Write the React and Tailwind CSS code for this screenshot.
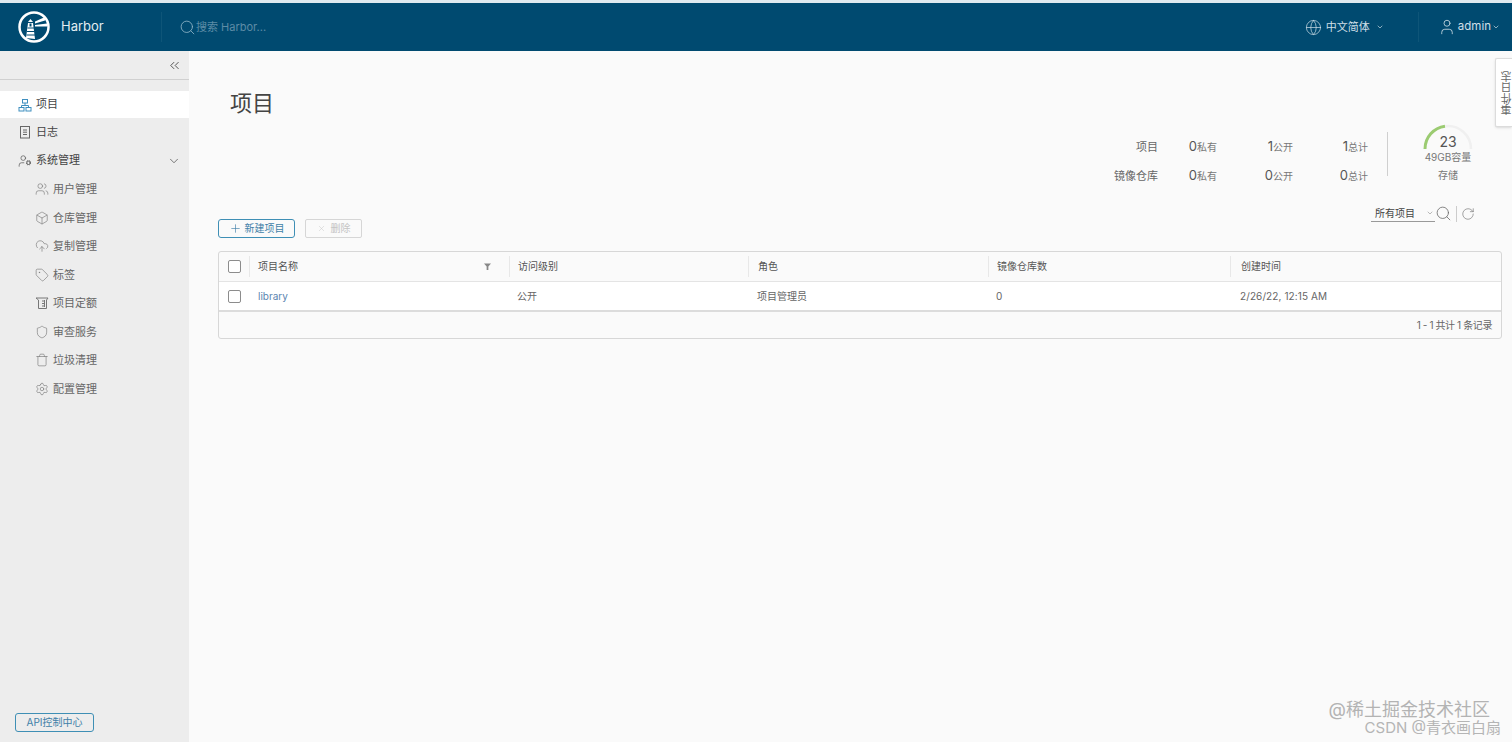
import React from 'react';
import {
  Box,
  ChevronDown,
  ChevronsLeft,
  CloudUpload,
  Globe,
  Plus,
  RotateCw,
  Search,
  Settings,
  Shield,
  Tag,
  Trash,
  User,
  UserCog,
  Users,
  X,
} from 'lucide-react';

const subNav = [
  { label: '用户管理', icon: Users },
  { label: '仓库管理', icon: Box },
  { label: '复制管理', icon: CloudUpload },
  { label: '标签', icon: Tag },
  { label: '项目定额', icon: QuotaIcon },
  { label: '审查服务', icon: Shield },
  { label: '垃圾清理', icon: Trash },
  { label: '配置管理', icon: Settings },
];

const stats = [
  { label: '项目', values: ['0', '1', '1'] },
  { label: '镜像仓库', values: ['0', '0', '0'] },
];
const statUnits = ['私有', '公开', '总计'];

const columns = [
  { label: '访问级别', width: 'w-[239px]', pad: 'pl-2' },
  { label: '角色', width: 'w-[240px]', pad: 'pl-[9px]' },
  { label: '镜像仓库数', width: 'w-[242px]', pad: 'pl-2' },
  { label: '创建时间', width: 'flex-1', pad: 'pl-2.5' },
];

function QuotaIcon({ size, className }) {
  return (
    <svg width={size} height={size} viewBox="0 0 14 14" fill="none" stroke="currentColor" strokeWidth="1" className={className}>
      <path d="M1 2h12l-1.500 2v8.500h-8V4z" />
      <path d="M7 5h2.500M7 7.500h2.500M7 10h2.500M9.500 4v7" />
    </svg>
  );
}

function ProjectIcon() {
  return (
    <svg viewBox="0 0 14 14" fill="none" stroke="#3f8fbf" strokeWidth="1" className="h-3.5 w-3.5 shrink-0">
      <rect x="4.500" y="1.500" width="5" height="3.500" />
      <rect x="1" y="9.500" width="5" height="3.500" />
      <rect x="8" y="9.500" width="5" height="3.500" />
      <path d="M7 5v2.500M3.500 9.500v-2h7v2" />
    </svg>
  );
}

function LogsIcon() {
  return (
    <svg viewBox="0 0 14 14" fill="none" stroke="#666" strokeWidth="1" className="h-3.5 w-3.5 shrink-0">
      <rect x="2.500" y="1.500" width="9" height="11.500" />
      <path d="M5 5h4M5 7.200h4M5 9.500h4" />
    </svg>
  );
}

function HarborLogo() {
  return (
    <svg viewBox="0 0 32 32" className="h-8 w-8 shrink-0">
      <circle cx="16" cy="16" r="14.500" fill="none" stroke="#fff" strokeWidth="2.500" />
      <path d="M8 27 10 12h5l2 16z" fill="#fff" />
      <path d="M10 11l2.500-3 2.500 3z" fill="#fff" />
      <path d="M9.500 17h6.500M9 20.500h7.500M8.500 24h8.500" stroke="#004a70" strokeWidth="1" />
      <rect x="11.500" y="12.500" width="2" height="3" fill="#004a70" />
      <path d="M17 10.500 27 6v3.500L17 12.500zM17 14l12-1.500v3L17 15.500z" fill="#fff" />
    </svg>
  );
}

function StorageGauge() {
  return (
    <svg viewBox="0 0 50 50" className="absolute left-0 top-0 h-[50px] w-[50px]">
      <path d="M22 2.200A23 23 0 0 1 48 25" fill="none" stroke="#f0f0f0" strokeWidth="2.500" />
      <path d="M2 25A23 23 0 0 1 22 2.200" fill="none" stroke="#9bcb71" strokeWidth="3" />
    </svg>
  );
}

function Checkbox() {
  return <span className="block h-[13px] w-[13px] rounded-[2px] border border-[#8c8c8c] bg-white" />;
}

export default function App() {
  return (
    <div className="relative flex h-[742px] w-[1512px] flex-col overflow-hidden bg-[#fafafa] font-['Inter','Noto_Sans_CJK_SC',sans-serif] text-[11px] text-[#666]">
      <div className="h-[3px] shrink-0 bg-[#dfeaf0]" />
      <header className="flex h-[48px] shrink-0 items-center bg-[#004a70] text-white">
        <div className="flex w-[161px] items-center pl-[18px]">
          <HarborLogo />
          <span className="ml-[11px] text-[13px] text-[#e3edf2]">Harbor</span>
        </div>
        <div className="h-[30px] w-px bg-[#0e5578]" />
        <div className="ml-[17px] flex items-center text-[11px] text-[#5d8ca6]">
          <Search size={17} strokeWidth={1.200} className="text-[#8fb3c6]" />
          <span>搜索 Harbor...</span>
        </div>
        <div className="ml-auto flex items-center text-[#cfdfe7]">
          <Globe size={17} strokeWidth={1} />
          <span className="ml-1">中文简体</span>
          <ChevronDown size={8} className="ml-[6px]" />
          <div className="ml-[34px] h-[30px] w-px bg-[#0e5578]" />
          <User size={18} strokeWidth={1.100} className="ml-[19px]" />
          <span className="ml-[2px] text-[11.500px]">admin</span>
          <ChevronDown size={8} className="ml-px mr-[12px]" />
        </div>
      </header>

      <div className="flex min-h-0 flex-1">
        <aside className="flex w-[189px] shrink-0 flex-col bg-[#ededed]">
          <div className="flex h-[29px] shrink-0 items-center justify-end border-b border-[#d0d0d0] pr-[7px]">
            <ChevronsLeft size={15} strokeWidth={1.300} className="text-[#333]" />
          </div>
          <nav className="mt-[11px] flex flex-col">
            <div className="flex h-[27px] items-center bg-white pl-[18px] text-[#444]">
              <ProjectIcon />
              <span className="ml-1">项目</span>
            </div>
            <div className="flex h-[28px] items-center pl-[18px] text-[#444]">
              <LogsIcon />
              <span className="ml-1">日志</span>
            </div>
            <div className="flex h-[29px] items-center pl-[18px] pr-[8px] text-[#444]">
              <UserCog size={14} strokeWidth={1.200} className="text-[#555]" />
              <span className="ml-1">系统管理</span>
              <ChevronDown size={14} strokeWidth={1.200} className="ml-auto text-[#444]" />
            </div>
            {subNav.map(({ label, icon: Icon }) => (
              <div key={label} className="flex h-[28.500px] items-center pl-[35px] text-[#666]">
                <Icon size={14} strokeWidth={1.100} className="text-[#777]" />
                <span className="ml-1">{label}</span>
              </div>
            ))}
          </nav>
          <div className="mt-auto pb-[10px] pl-[15px]">
            <button className="flex h-[19px] w-[79px] items-center justify-center rounded-[3px] border border-[#3f8fb5] text-[10px] text-[#3f7fa8]">
              API控制中心
            </button>
          </div>
        </aside>

        <main className="flex min-w-0 flex-1 flex-col pl-[29px] pr-[10px]">
          <h1 className="ml-[12px] mt-[35px] text-[22px] leading-[34px] font-normal text-[#444]">项目</h1>

          <div className="mt-[12px] flex justify-end pr-[29px]">
            <div className="flex h-[56px] flex-col justify-between pt-[3px]">
              {stats.map((row) => (
                <div key={row.label} className="flex h-[24px] items-center">
                  <span className="w-[60px] text-right text-[#666]">{row.label}</span>
                  {row.values.map((value, i) => (
                    <div key={i} className={i === 0 ? 'w-[59px] text-right' : i === 1 ? 'w-[76px] text-right' : 'w-[75px] text-right'}>
                      <span className="text-[13px] text-[#555]">{value}</span>
                      <span className="text-[10px] text-[#777]">{statUnits[i]}</span>
                    </div>
                  ))}
                </div>
              ))}
            </div>
            <div className="ml-[19px] mr-[35px] h-[44px] w-px bg-[#cfcfcf]" />
            <div className="relative -mt-[8px] flex h-[62px] w-[50px] flex-col items-center">
              <StorageGauge />
              <span className="mt-[9px] text-[14px] leading-[17px] text-[#555]">23</span>
              <span className="whitespace-nowrap text-[10px] leading-[14px] text-[#777]">49GB容量</span>
              <span className="mt-[4px] text-[10px] leading-[14px] text-[#777]">存储</span>
            </div>
          </div>

          <div className="mt-[20px] flex h-[32px] items-end">
            <button className="mb-[2px] flex h-[19px] w-[77px] items-center justify-center rounded-[3px] border border-[#3f8fb5] text-[10px] text-[#3f7fa8]">
              <Plus size={13} strokeWidth={1.200} className="mr-[3px]" />
              新建项目
            </button>
            <button className="mb-[2px] ml-[10px] flex h-[19px] w-[57px] items-center justify-center rounded-[2px] border border-[#d6d6d6] text-[10px] text-[#c4c4c4]">
              <X size={9} strokeWidth={1.200} className="mr-[5px]" />
              删除
            </button>
            <div className="mb-[18px] ml-auto mr-[27px] flex items-center">
              <div className="flex h-[16px] w-[64px] items-center justify-between border-b border-[#999] pl-1 pr-px text-[#444]">
                <span className="text-[10px]">所有项目</span>
                <ChevronDown size={8} className="text-[#999]" />
              </div>
              <Search size={17} strokeWidth={1.100} className="text-[#666]" />
              <div className="ml-[4px] h-[16px] w-px bg-[#ccc]" />
              <RotateCw size={14} strokeWidth={1} className="ml-[4px] text-[#666]" />
            </div>
          </div>

          <div className="mt-[11px] overflow-hidden rounded-[3px] border border-[#d7d7d7]">
            <div className="flex h-[30px] items-center border-b border-[#e4e4e4] text-[10px] text-[#555]">
              <div className="flex w-[30px] justify-center"><Checkbox /></div>
              <div className="flex h-[21px] w-[260px] items-center border-l border-[#e8e8e8] pl-2">
                <span>项目名称</span>
                <svg viewBox="0 0 8 8" className="ml-auto mr-[18px] h-[7px] w-[7px] fill-[#888]">
                  <path d="M0 0.500h8L5 4v4H3V4z" />
                </svg>
              </div>
              {columns.map((col) => (
                <div key={col.label} className={`flex h-[21px] items-center border-l border-[#e8e8e8] ${col.width} ${col.pad}`}>
                  {col.label}
                </div>
              ))}
            </div>
            <div className="flex h-[30px] items-center border-b-2 border-[#dcdcdc] bg-white text-[10px] text-[#666]">
              <div className="flex w-[30px] justify-center"><Checkbox /></div>
              <div className="w-[260px] pl-[9px] text-[#5a85b0]">library</div>
              <div className="w-[239px] pl-2">公开</div>
              <div className="w-[240px] pl-[9px]">项目管理员</div>
              <div className="w-[242px] pl-2">0</div>
              <div className="flex-1 pl-2.5 tracking-[0.1px]">2/26/22, 12:15 AM</div>
            </div>
            <div className="flex h-[26px] items-center justify-end pr-[9px] text-[10px] tracking-[-0.4px] text-[#666]">
              1 - 1 共计 1 条记录
            </div>
          </div>
        </main>
      </div>

      {/* side tab that floats over the page */}
      <div className="absolute right-0 top-[58px] flex h-[69px] w-[17px] items-center justify-center rounded-l-[2px] border border-r-0 border-[#dcdcdc] bg-white shadow-sm">
        <span className="ml-[6px] rotate-180 text-[11px] whitespace-nowrap text-[#666] [writing-mode:vertical-rl]">事件日志</span>
      </div>

      {/* watermark */}
      <div className="pointer-events-none absolute right-[11px] top-[700px] flex flex-col items-end leading-none">
        <span className="mr-[11px] text-[18px] leading-[20px] text-[#b3b3b3]">@稀土掘金技术社区</span>
        <span className="text-[15px] leading-[15px] text-[#b5b5b5]">CSDN @青衣画白扇</span>
      </div>
    </div>
  );
}
